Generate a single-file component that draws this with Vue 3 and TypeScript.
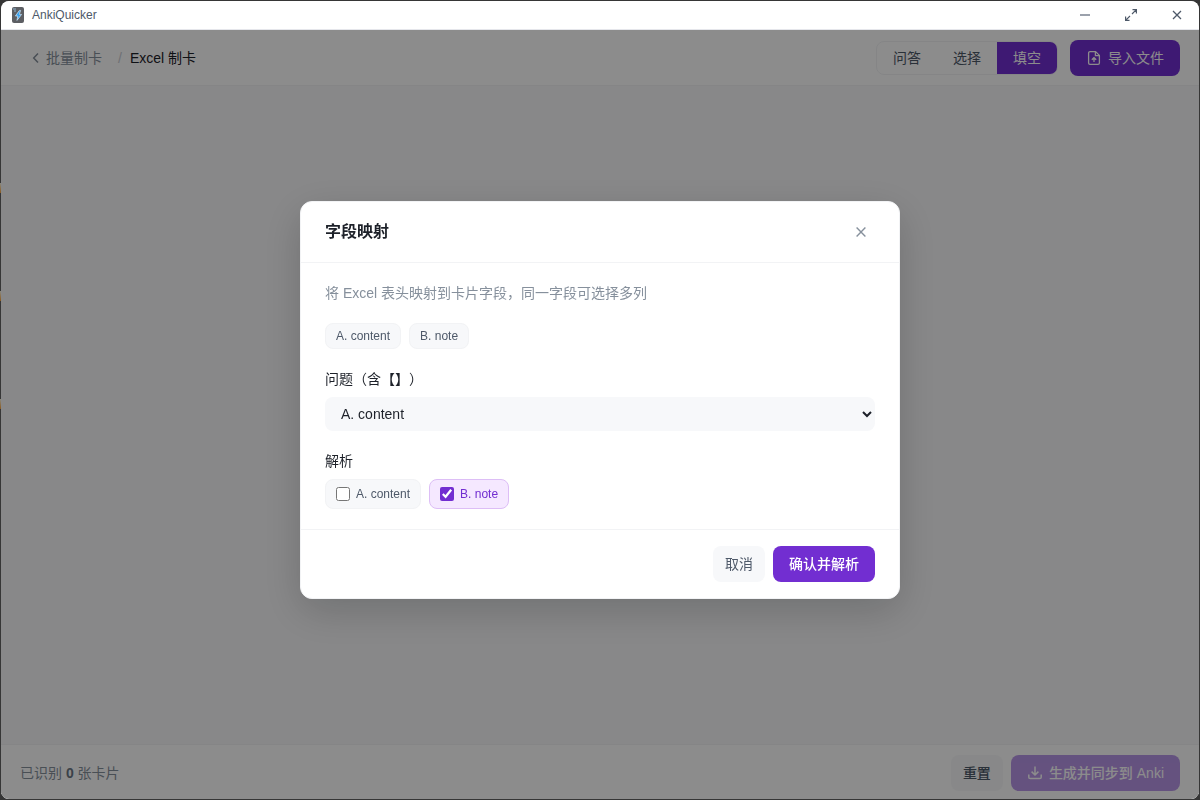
<script setup lang="ts">
import { ref } from 'vue'

interface Column {
  id: string
  label: string
}

const columns: Column[] = [
  { id: 'a', label: 'A. content' },
  { id: 'b', label: 'B. note' },
]
const modes: string[] = ['问答', '选择', '填空']

const mode = ref('填空')
const question = ref('a')
const notes = ref<string[]>(['b'])
const cardCount = ref(0)
const dialogOpen = ref(true)
</script>

<template>
  <div class="desktop">
    <div class="window">
      <header class="titlebar">
        <svg class="app-icon" width="12" height="16" viewBox="0 0 12 16" aria-hidden="true">
          <rect width="12" height="16" rx="2" fill="#5c5e63" />
          <path d="M1 2h3M2 4h2" stroke="#8fb4d0" stroke-width="1" />
          <path d="M7.4 3.4 3.4 9h2.4l-.8 4.4 4.6-6H7.4l1.2-4z" fill="#37a3f2" stroke="#d5e8f7" stroke-width="0.7" />
        </svg>
        <span class="app-name">AnkiQuicker</span>
        <div class="controls">
          <button type="button" aria-label="最小化">
            <svg width="14" height="14" viewBox="0 0 14 14"><path d="M2 7h10" stroke="#9ba1ac" stroke-width="2" /></svg>
          </button>
          <button type="button" aria-label="最大化">
            <svg width="14" height="14" viewBox="0 0 14 14" fill="none" stroke="#4e5969" stroke-width="1.2">
              <path d="M8.5 1.6h3.9v3.9M12.4 1.6 8 6M5.5 12.4H1.6V8.5M1.6 12.4 6 8" />
            </svg>
          </button>
          <button type="button" aria-label="关闭">
            <svg width="14" height="14" viewBox="0 0 14 14" fill="none" stroke="#4e5969" stroke-width="1.3">
              <path d="m3 3 8 8M11 3l-8 8" />
            </svg>
          </button>
        </div>
      </header>

      <div class="toolbar">
        <nav class="crumbs">
          <a href="#" class="back">
            <svg width="14" height="14" viewBox="0 0 14 14" fill="none" stroke="currentColor" stroke-width="1.5">
              <path d="M9 2.5 4.7 7 9 11.5" />
            </svg>
            批量制卡
          </a>
          <span class="slash">/</span>
          <span class="current">Excel 制卡</span>
        </nav>
        <div class="actions">
          <div class="segmented">
            <button
              v-for="m in modes"
              :key="m"
              type="button"
              :class="{ active: m === mode }"
              @click="mode = m"
            >{{ m }}</button>
          </div>
          <button type="button" class="btn primary">
            <svg width="16" height="16" viewBox="0 0 16 16" fill="none" stroke="currentColor" stroke-width="1.3">
              <path d="M9.6 1.6H4A1.4 1.4 0 0 0 2.6 3v10A1.4 1.4 0 0 0 4 14.4h8a1.4 1.4 0 0 0 1.4-1.4V5.4z" stroke-linejoin="round" />
              <path d="M9.4 1.8v3.8h3.8M8 12V7.8M5.8 9.8 8 7.6l2.2 2.2" />
              <path d="M6 9.6 8 7.6l2 2z" fill="currentColor" stroke="none" />
            </svg>
            导入文件
          </button>
        </div>
      </div>

      <main class="content"></main>

      <footer class="statusbar">
        <span class="count">已识别 <b>{{ cardCount }}</b> 张卡片</span>
        <div class="buttons">
          <button type="button" class="btn plain">重置</button>
          <button type="button" class="btn primary" disabled>
            <svg width="16" height="16" viewBox="0 0 16 16" fill="none" stroke="currentColor" stroke-width="1.5">
              <path d="M8 1.5v8.3M4.6 6.6 8 10l3.4-3.4M1.8 9.5v2.7c0 .8.6 1.4 1.4 1.4h9.6c.8 0 1.4-.6 1.4-1.4V9.5" />
            </svg>
            生成并同步到 Anki
          </button>
        </div>
      </footer>
    </div>

    <div v-if="dialogOpen" class="overlay">
      <section class="dialog" role="dialog" aria-modal="true" aria-labelledby="dialog-title">
        <header class="dialog-head">
          <h2 id="dialog-title">字段映射</h2>
          <button type="button" class="close" aria-label="关闭" @click="dialogOpen = false">
            <svg width="14" height="14" viewBox="0 0 14 14" fill="none" stroke="currentColor" stroke-width="1.4">
              <path d="m2.6 2.6 8.8 8.8M11.4 2.6l-8.8 8.8" />
            </svg>
          </button>
        </header>
        <div class="dialog-body">
          <p class="hint">将 Excel 表头映射到卡片字段，同一字段可选择多列</p>
          <div class="chips">
            <span v-for="c in columns" :key="c.id" class="chip">{{ c.label }}</span>
          </div>
          <div class="field">
            <label for="question">问题（含【】）</label>
            <select id="question" v-model="question">
              <option v-for="c in columns" :key="c.id" :value="c.id">{{ c.label }}</option>
            </select>
          </div>
          <fieldset class="field">
            <legend>解析</legend>
            <div class="chips">
              <label v-for="c in columns" :key="c.id" class="check" :class="{ checked: notes.includes(c.id) }">
                <input v-model="notes" type="checkbox" :value="c.id" />
                <span>{{ c.label }}</span>
              </label>
            </div>
          </fieldset>
        </div>
        <footer class="dialog-foot">
          <button type="button" class="btn plain" @click="dialogOpen = false">取消</button>
          <button type="button" class="btn primary">确认并解析</button>
        </footer>
      </section>
    </div>
  </div>
</template>

<style>
body {
  margin: 0;
  background: #1c1c1c;
}
</style>

<style scoped>
.desktop {
  box-sizing: border-box;
  height: 100vh;
  padding: 1px;
  background:
    linear-gradient(#8a8a80, #8a5a20) 0 183px / 1px 10px no-repeat,
    linear-gradient(#8a8a80, #8a5a20) 0 291px / 1px 10px no-repeat,
    linear-gradient(#8a8a80, #8a5a20) 0 399px / 1px 10px no-repeat,
    #363636;
  font-family: "Liberation Sans", "Noto Sans CJK SC", sans-serif;
  font-size: 14px;
  line-height: 20px;
  color: #1d2129;
  text-spacing-trim: space-all;
}
button,
select {
  font: inherit;
}
button {
  cursor: pointer;
}
svg {
  display: block;
  flex: none;
}
.window {
  display: flex;
  flex-direction: column;
  height: 100%;
  border-radius: 8px;
  overflow: hidden;
  background: #f7f8fa;
}
.titlebar {
  position: relative;
  z-index: 20;
  display: flex;
  align-items: center;
  height: 28px;
  padding-left: 11px;
  border-bottom: 1px solid #e5e6eb;
  border-radius: 8px 8px 0 0;
  background: #fff;
}
.app-name {
  margin-left: 8px;
  font-size: 12px;
  color: #4e5969;
}
.controls {
  display: flex;
  gap: 2px;
  margin-left: auto;
}
.controls button {
  display: grid;
  place-items: center;
  width: 44px;
  height: 28px;
  padding: 0;
  border: 0;
  background: none;
}
.toolbar {
  display: flex;
  align-items: center;
  justify-content: space-between;
  padding: 10px 19px 9px 28px;
  border-bottom: 1px solid #f2f3f5;
  background: #fff;
}
.crumbs {
  display: flex;
  align-items: center;
}
.back {
  display: flex;
  align-items: center;
  gap: 3px;
  color: #86909c;
  text-decoration: none;
}
.slash {
  margin: 0 8px 0 16px;
  color: #c9cdd4;
}
.actions,
.buttons {
  display: flex;
  align-items: center;
  gap: 12px;
}
.buttons {
  gap: 8px;
}
.segmented {
  display: flex;
  overflow: hidden;
  border: 1px solid #f2f3f5;
  border-radius: 8px;
}
.segmented button {
  height: 32px;
  padding: 0 16px;
  border: 0;
  background: none;
  color: #4e5969;
}
.segmented .active {
  background: #722ed1;
  color: #fff;
}
.btn {
  display: flex;
  align-items: center;
  gap: 6px;
  height: 36px;
  padding: 0 16px;
  border: 0;
  border-radius: 8px;
}
.primary {
  background: #722ed1;
  color: #fff;
}
.primary:disabled {
  opacity: 0.5;
  cursor: not-allowed;
}
.plain {
  padding: 0 12px;
  background: #f7f8fa;
  color: #4e5969;
}
.content {
  flex: 1;
}
.statusbar {
  display: flex;
  align-items: center;
  justify-content: space-between;
  padding: 10px 19px 8px;
  border-top: 1px solid #f2f3f5;
  background: #fff;
}
.statusbar .btn {
  font-weight: 500;
}
.count {
  color: #86909c;
}
.count b {
  color: #6b7785;
}
.overlay {
  position: fixed;
  inset: 30px 1px 1px;
  z-index: 10;
  display: grid;
  place-items: center;
  padding-bottom: 29px;
  border-radius: 0 0 8px 8px;
  background: rgba(0, 0, 0, 0.45);
}
.dialog {
  box-sizing: border-box;
  width: 600px;
  max-width: 90%;
  border: 1px solid #f2f3f5;
  border-radius: 12px;
  background: #fff;
  box-shadow: 0 12px 40px rgba(0, 0, 0, 0.18);
}
.dialog-head {
  display: flex;
  align-items: center;
  justify-content: space-between;
  padding: 16px 24px;
  border-bottom: 1px solid #f2f3f5;
}
.dialog-head h2 {
  margin: 0;
  font-size: 16px;
  font-weight: 600;
}
.close {
  display: grid;
  place-items: center;
  width: 28px;
  height: 28px;
  padding: 0;
  border: 0;
  background: none;
  color: #86909c;
}
.dialog-body {
  display: grid;
  gap: 20px;
  padding: 20px 24px;
}
.hint {
  margin: 0;
  color: #86909c;
}
.chips {
  display: flex;
  gap: 8px;
  font-size: 12px;
  line-height: 18px;
}
.chip {
  padding: 3px 10px;
  border: 1px solid #f2f3f5;
  border-radius: 8px;
  background: #f7f8fa;
  color: #4e5969;
}
.field {
  display: block;
  min-width: 0;
  margin: 0;
  padding: 0;
  border: 0;
}
.field > label,
legend {
  display: block;
  padding: 0;
  margin-bottom: 8px;
}
select {
  display: block;
  width: 100%;
  height: 34px;
  padding: 0 0 0 12px;
  border: 0;
  border-radius: 8px;
  background: #f7f8fa;
  color: #1d2129;
}
.check {
  display: flex;
  align-items: center;
  gap: 6px;
  padding: 5px 10px;
  border: 1px solid #f2f3f5;
  border-radius: 8px;
  background: #f7f8fa;
  color: #4e5969;
}
.check.checked {
  border-color: #ddbef6;
  background: #f5e8ff;
  color: #722ed1;
}
.check input {
  width: 14px;
  height: 14px;
  margin: 0;
  accent-color: #722ed1;
}
.dialog-foot {
  display: flex;
  justify-content: flex-end;
  gap: 8px;
  padding: 16px 24px;
  border-top: 1px solid #f2f3f5;
}
.dialog-foot .primary {
  font-weight: 500;
}
</style>
